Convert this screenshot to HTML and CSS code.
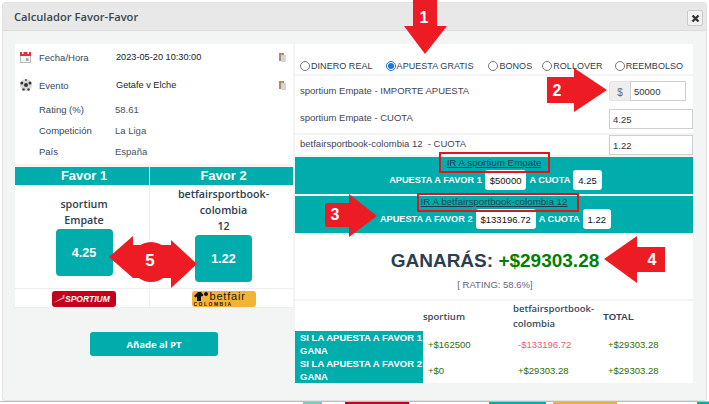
FILE: index.html
```html
<!DOCTYPE html>
<html lang="es">
<head>
<meta charset="utf-8">
<title>Calculador Favor-Favor</title>
<link rel="stylesheet" href="styles.css">
</head>
<body>
<div class="modal">
  <header class="modal-head">
    <h1>Calculador Favor-Favor</h1>
    <button class="close" aria-label="Cerrar">
      <svg width="9" height="9" viewBox="0 0 9 9"><path d="M1.5 1.5 7.5 7.5M7.5 1.5 1.5 7.5" stroke="#333" stroke-width="2.4"/></svg>
    </button>
  </header>
  <div class="modal-body">
    <div class="left">
      <section class="info">
        <div class="info-row tall">
          <svg class="ico" width="11" height="11" viewBox="0 0 11 11"><rect x=".5" y=".5" width="10" height="10" fill="#f4f4f4" stroke="#bbb"/><rect x="0" y="0" width="11" height="4" fill="#d8343a"/><rect x="2" y="0" width="1.5" height="2" fill="#fff"/><rect x="7.5" y="0" width="1.5" height="2" fill="#fff"/><rect x="6" y="6" width="2.5" height="3" fill="#aaa"/></svg>
          <span class="lbl">Fecha/Hora</span><span class="val dark">2023-05-20 10:30:00</span>
          <svg class="copy" width="7" height="9" viewBox="0 0 7 9"><rect width="5" height="8" fill="#a98d6c"/><rect x="2" y="2" width="5" height="7" fill="#d5d5d5"/></svg>
        </div>
        <div class="info-row tall">
          <svg class="ico" width="12" height="12" viewBox="0 0 12 12"><circle cx="6" cy="6" r="6" fill="#d8d8d8"/><circle cx="6" cy="6" r="2" fill="#333"/><circle cx="1.800" cy="4" r="1.500" fill="#333"/><circle cx="10" cy="4" r="1.500" fill="#333"/><circle cx="6" cy="1" r="1" fill="#555"/><circle cx="3.500" cy="10.500" r="1.300" fill="#444"/><circle cx="8.500" cy="10.500" r="1.300" fill="#444"/></svg>
          <span class="lbl">Evento</span><span class="val dark">Getafe v Elche</span>
          <svg class="copy" width="7" height="9" viewBox="0 0 7 9"><rect width="5" height="8" fill="#a98d6c"/><rect x="2" y="2" width="5" height="7" fill="#d5d5d5"/></svg>
        </div>
        <div class="info-row"><span></span><span class="lbl">Rating (%)</span><span class="val shift">58.61</span></div>
        <div class="info-row"><span></span><span class="lbl">Competición</span><span class="val shift">La Liga</span></div>
        <div class="info-row"><span></span><span class="lbl">País</span><span class="val shift">España</span></div>
      </section>
      <section class="favors">
        <div class="fav-head">Favor 1</div>
        <div class="fav-head">Favor 2</div>
        <div class="fav-cell">
          <div>sportium</div><div>Empate</div>
          <div class="odd">4.25</div>
        </div>
        <div class="fav-cell second">
          <div>betfairsportbook-</div><div>colombia</div><div>12</div>
          <div class="odd">1.22</div>
        </div>
        <div class="logo-cell">
          <div class="logo sportium-logo">
            <svg width="12" height="10" viewBox="0 0 12 10"><path d="M0 9 12 4 9 2 11 1 12 2" fill="#f3c9cf"/></svg>
            <span>SPORTIUM</span>
          </div>
        </div>
        <div class="logo-cell">
          <div class="logo betfair-logo">
            <svg class="bf-mark" width="15" height="9" viewBox="0 0 15 9"><path d="M0 4 4 0H7L9.500 3 8 4.500 7 4V9H3V4.500L1.500 5.500Z" fill="#111"/><circle cx="12" cy="2" r="2" fill="#111"/></svg>
            <span class="bf-top">betfair</span><span class="bf-sub">COLOMBIA</span>
          </div>
        </div>
      </section>
      <div class="add-wrap"><button class="add">Añade al PT</button></div>
    </div>

    <div class="right">
      <section class="radios">
        <label class="radio gap-a"><input type="radio" name="t">DINERO REAL</label>
        <label class="radio gap-b"><input type="radio" name="t" checked>APUESTA GRATIS</label>
        <label class="radio gap-c"><input type="radio" name="t">BONOS</label>
        <label class="radio gap-d"><input type="radio" name="t">ROLLOVER</label>
        <label class="radio"><input type="radio" name="t">REEMBOLSO</label>
      </section>
      <section class="fields">
        <div class="field first">
          <span>sportium Empate - IMPORTE APUESTA</span>
          <div class="group"><span class="addon">$</span><input class="inp short" value="50000"></div>
        </div>
        <div class="field second-field">
          <span>sportium Empate - CUOTA</span>
          <input class="inp" value="4.25">
        </div>
      </section>
      <section class="field third">
        <span>betfairsportbook-colombia 12 &nbsp;- CUOTA</span>
        <input class="inp" value="1.22">
      </section>
      <section class="bet">
        <a class="go" href="#">IR A sportium Empate</a>
        <div class="bet-line">APUESTA A FAVOR 1 <span class="pill">$50000</span> A CUOTA <span class="pill">4.25</span></div>
      </section>
      <section class="bet">
        <a class="go" href="#">IR A betfairsportbook-colombia 12</a>
        <div class="bet-line">APUESTA A FAVOR 2 <span class="pill">$133196.72</span> A CUOTA <span class="pill">1.22</span></div>
      </section>
      <section class="result">
        <div class="win">GANARÁS: <span class="green-big">+$29303.28</span></div>
        <div class="rating">[ RATING: 58.6%]</div>
      </section>
      <section class="summary">
        <table>
          <thead>
            <tr><th></th><th>sportium</th><th>betfairsportbook-colombia</th><th>TOTAL</th></tr>
          </thead>
          <tbody>
            <tr><td class="case">SI LA APUESTA A FAVOR 1 GANA</td><td class="pos">+$162500</td><td class="neg">-$133196.72</td><td class="pos">+$29303.28</td></tr>
            <tr><td class="case">SI LA APUESTA A FAVOR 2 GANA</td><td class="pos">+$0</td><td class="pos">+$29303.28</td><td class="pos">+$29303.28</td></tr>
          </tbody>
        </table>
      </section>
    </div>
  </div>
</div>
<div class="under">
  <i class="u-a"></i><i class="u-b"></i><i class="u-c"></i><i class="u-d"></i><i class="u-e"></i>
</div>

<svg class="notes" width="709" height="404" viewBox="0 0 709 404">
  <g fill="#ed1c24">
    <path d="M413 0H437V26H447L425 54 404 26H413Z"/>
    <path d="M547 77H574V68L607 90 574 112V103H547Z"/>
    <path d="M325 205Q325 203 327 203H349V194L377 216 349 237V227H327Q325 227 325 225Z"/>
    <path d="M604 259 637 236V247H665V272H637V283Z"/>
    <path d="M109 257 133 236V245H171V240L197 264 171 288V278H133Z"/>
    <circle cx="151" cy="262" r="20"/>
  </g>
  <g fill="#fff" font-family="Liberation Sans, Arial, sans-serif" font-weight="700" text-anchor="middle">
    <text x="424" y="23" font-size="16">1</text>
    <text x="557" y="96" font-size="16">2</text>
    <text x="335" y="220" font-size="16">3</text>
    <text x="652" y="265" font-size="16">4</text>
    <text x="150" y="266" font-size="17">5</text>
  </g>
  <g fill="none" stroke="#e4141d" stroke-width="2">
    <rect x="440" y="153" width="109" height="19"/>
    <rect x="418" y="194" width="160" height="17"/>
  </g>
</svg>
</body>
</html>
```

FILE: styles.css
```css
* { box-sizing: border-box; }
html, body { margin: 0; padding: 0; }
body {
  width: 709px;
  height: 404px;
  overflow: hidden;
  background: #fff;
  position: relative;
  font-family: "Liberation Sans", Arial, sans-serif;
  font-size: 10px;
  color: #34495e;
}
.modal {
  margin: 2px 2px 0;
  height: 399px;
  background: #f3f5f5;
  border: 1px solid #e2e2e2;
  border-radius: 3px;
  display: flex;
  flex-direction: column;
}
.modal-head {
  height: 28px;
  flex: none;
  background: #e8e8e8;
  border-bottom: 1px solid #dcdcdc;
  display: flex;
  align-items: center;
  justify-content: space-between;
  padding: 0 3px 0 11px;
}
.modal-head h1 {
  margin: 0;
  font: 600 11.200px "Open Sans", sans-serif;
  color: #3c4650;
}
.close {
  width: 16px;
  height: 16px;
  padding: 0;
  margin-top: 3px;
  background: #f4f4f4;
  border: 1px solid #c9c9c9;
  border-radius: 2px;
  display: flex;
  align-items: center;
  justify-content: center;
}
.modal-body {
  display: flex;
  gap: 2px;
  padding: 13px 12px 0;
  flex: 1;
}
.left { width: 278px; flex: none; display: flex; flex-direction: column; }
.right { width: 398px; flex: none; display: flex; flex-direction: column; }

.info { background: #fff; height: 120px; }
.info-row {
  display: grid;
  grid-template-columns: 24px 76px 164px 1fr;
  align-items: center;
  height: 21px;
}
.info-row.tall { height: 28px; }
.info-row.tall:first-child { height: 26px; margin-bottom: 1px; }
.ico { margin-left: 5px; }
.lbl { color: #34495e; font-size: 9.500px; }
.val { font-size: 9.500px; }
.val.dark { color: #222; padding-left: 1px; font-size: 9.200px; }
.val.shift { color: #445566; }

.favors {
  margin-top: 3px;
  display: grid;
  grid-template-columns: 134px 144px;
  grid-template-rows: 18px 104px 18px;
  background: #fff;
  box-shadow: 0 1px #eeeeee;
}
.fav-head {
  background: #00adad;
  color: #fff;
  font-size: 13px;
  font-weight: 700;
  text-align: center;
  line-height: 18px;
  padding-left: 4px;
}
.fav-head + .fav-head { border-left: 1px solid #fff; }
.fav-cell {
  display: flex;
  flex-direction: column;
  align-items: center;
  justify-content: center;
  font: 600 10.700px/16px "Open Sans", sans-serif;
  color: #2e3d50;
  padding: 0 0 1px 4px;
  border-bottom: 1px solid #eeeeee;
}
.fav-cell.second { border-left: 1px solid #eeeeee; padding-bottom: 5px; }
.odd {
  width: 57px;
  height: 47px;
  margin-top: 1px;
  background: #00adad;
  border-radius: 4px;
  color: #fff;
  font: 700 12.500px "Liberation Sans", Arial, sans-serif;
  display: flex;
  align-items: center;
  justify-content: center;
}
.logo-cell {
  display: flex;
  align-items: flex-end;
  justify-content: center;
  padding-left: 4px;
}
.logo-cell + .logo-cell { border-left: 1px solid #eeeeee; }
.logo { width: 64px; height: 16px; border-radius: 3px; }
.sportium-logo {
  background: #c4001c;
  color: #fff;
  font-size: 8.500px;
  font-style: italic;
  font-weight: 700;
  display: flex;
  align-items: center;
  padding-left: 1px;
}
.betfair-logo {
  background: #f5b335;
  color: #1a1a1a;
  display: grid;
  grid-template-columns: 16px 1fr;
  grid-template-rows: 10px 6px;
  padding-left: 2px;
}
.bf-mark { margin-top: 1px; }
.bf-top { font-size: 11px; line-height: 10px; letter-spacing: .8px; }
.bf-sub {
  grid-column: 1 / 3;
  font-size: 5px;
  line-height: 6px;
  letter-spacing: 1.500px;
  font-weight: 700;
}
.add-wrap { display: flex; justify-content: center; padding: 25px 0 0 0; }
.add {
  width: 128px;
  height: 24px;
  background: #00adad;
  color: #fff;
  border: 0;
  border-radius: 3px;
  padding: 0;
  font: 700 9.500px "Open Sans", sans-serif;
}

.radios {
  background: #fff;
  height: 30px;
  padding: 13px 0 0 5px;
  display: flex;
  align-items: center;
  color: #2c3e50;
  font-size: 9px;
  letter-spacing: .05px;
}
.radio { display: flex; align-items: center; white-space: nowrap; }
.radio input { width: 10px; height: 10px; margin: 0 1px 0 0; accent-color: #1a73e8; }
.gap-a { margin-right: 13px; }
.gap-b { margin-right: 15px; }
.gap-c { margin-right: 10px; }
.gap-d { margin-right: 12px; }

.fields { background: #fff; margin-top: 2px; height: 57px; }
.field {
  display: flex;
  justify-content: space-between;
  align-items: flex-start;
  padding-left: 5px;
  color: #445;
  font-size: 9.500px;
}
.field > span { display: block; }
.field.first { height: 28px; padding: 5px 0 0 5px; }
.field.first > span { padding-top: 4px; }
.field.second-field { height: 29px; padding-top: 5px; }
.field.second-field > span { padding-top: 3px; }
.field.third { background: #fff; margin-top: 2px; height: 20px; }
.field.third > span { padding-top: 3px; }
.inp {
  width: 84px;
  height: 20px;
  border: 1px solid #cfcfcf;
  padding: 0 3px;
  font: 9.500px "Liberation Sans", Arial, sans-serif;
  color: #333;
  background: #fff;
  border-radius: 0;
}
.group { display: flex; margin-right: 7px; }
.addon {
  width: 21px;
  height: 20px;
  background: #eeeeee;
  border: 1px solid #e4e4e4;
  border-right: 0;
  border-radius: 3px 0 0 3px;
  color: #667;
  font-size: 10px;
  display: flex;
  align-items: center;
  justify-content: center;
  padding-top: 2px;
}
.inp.short { width: 56px; }

.bet {
  background: #00adad;
  margin-top: 2px;
  height: 37px;
  text-align: center;
  color: #fff;
  font-weight: 700;
  font-size: 9.200px;
}
.go {
  display: block;
  color: #1f3f4f;
  font-weight: 400;
  text-decoration: underline;
  font-size: 9.800px;
  line-height: 12px;
}
.bet-line { display: flex; justify-content: center; align-items: center; gap: 3px; padding: 1px 0 0 3px; }
.pill {
  background: #fff;
  color: #111;
  border-radius: 3px;
  height: 20px;
  min-width: 28px;
  padding: 0 5px;
  display: inline-flex;
  align-items: center;
  justify-content: center;
  font-size: 9.500px;
  font-weight: 400;
}

.result { background: #fff; height: 64px; text-align: center; margin-top: 2px; padding: 15px 0 0 2px; }
.win { font-size: 19px; font-weight: 700; color: #2c3e50; line-height: 22px; }
.green-big { color: #008000; }
.rating { font-size: 9.500px; color: #667; margin-top: 7px; line-height: 12px; }

.summary { background: #fff; margin-top: 2px; height: 82px; }
.summary table { border-collapse: collapse; table-layout: fixed; width: 398px; }
.summary th:nth-child(1) { width: 128px; }
.summary th:nth-child(2), .summary th:nth-child(3) { width: 90px; }
.summary th {
  height: 30px;
  padding: 0;
  text-align: left;
  font: 600 9.500px/15px "Open Sans", sans-serif;
  color: #34495e;
}
.summary th:nth-child(3) { padding-right: 8px; }
.summary th:nth-child(4) { font: 700 9.500px "Liberation Sans", Arial, sans-serif; }
.summary td { padding: 0 0 0 5px; font-size: 9.500px; height: 26px; }
.summary td.case {
  background: #00adad;
  color: #fff;
  font-weight: 700;
  line-height: 13px;
}
.pos { color: #2a6e08; }
.neg { color: #f25b68; }

.under {
  position: relative;
  height: 3px;
  border-top: 1px solid #bdbdbd;
  display: flex;
}
.under i { display: block; height: 2px; }
.u-a { width: 19px; margin-left: 303px; background: #7cc6c6; }
.u-b { width: 64px; margin-left: 23px; background: #c4001c; }
.u-c { width: 57px; margin-left: 80px; background: #00adad; }
.u-d { width: 64px; margin-left: 7px; background: #e8b040; }
.u-e { width: 12px; margin-left: 80px; background: #00adad; }

.notes { position: absolute; left: 0; top: 0; pointer-events: none; }
```
